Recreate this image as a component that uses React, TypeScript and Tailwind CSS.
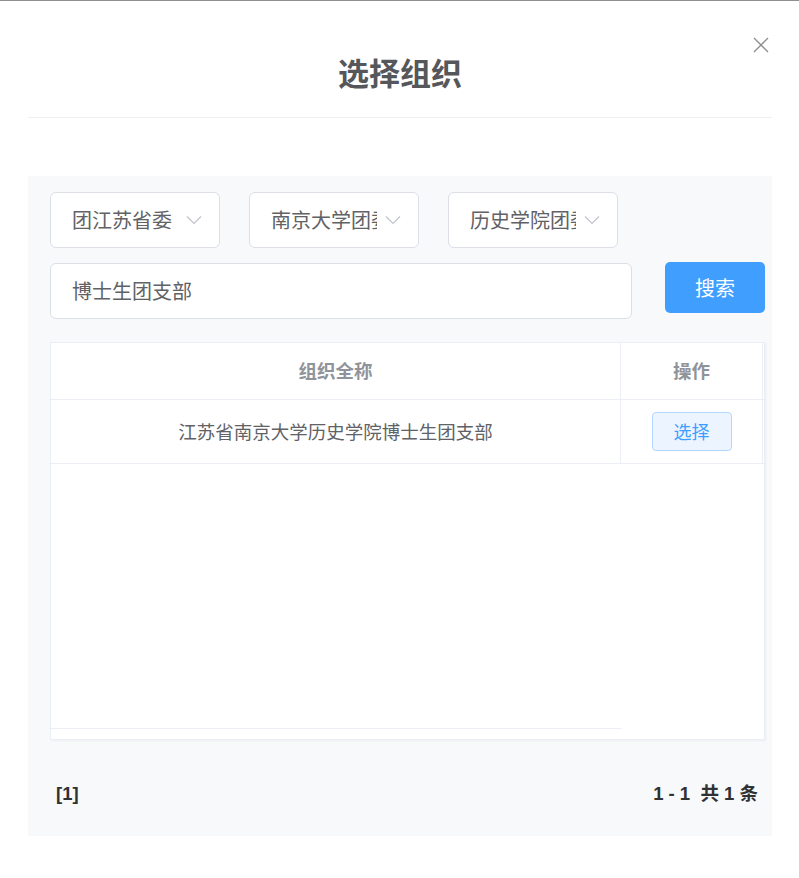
import React from "react";

const font = { fontFamily: '"Noto Sans CJK SC", "Noto Sans", sans-serif' };

function Chevron() {
  return (
    <svg width="16" height="9" viewBox="0 0 16 9" className="absolute right-[17px] top-1/2 -translate-y-1/2">
      <path d="M1 1 L8 8 L15 1" fill="none" stroke="#c0c4cc" strokeWidth="1.2" />
    </svg>
  );
}

function Select({ text }: { text: string }) {
  return (
    <div className="relative w-[170px] h-[56px] rounded-[6px] border border-[#dcdfe6] bg-white flex items-center pl-[21px] pr-[41px]">
      <div className="overflow-hidden whitespace-nowrap text-[20px] text-[#606266] leading-none">{text}</div>
      <Chevron />
    </div>
  );
}

export default function App() {
  return (
    <div className="w-[799px] h-[878px] bg-white relative" style={font}>
      <div className="h-px bg-[#8f8f8f]" />
      <div className="ml-[28px] mr-[27px]">
        <div className="relative h-[116px] flex items-center justify-center">
          <div className="text-[31px] font-bold text-[#55575b] mt-[26px]">选择组织</div>
          <svg width="16" height="16" viewBox="0 0 16 16" className="absolute right-[3px] top-[36px]">
            <path d="M1 1 L15 15 M15 1 L1 15" stroke="#8c8c8c" strokeWidth="1.3" />
          </svg>
        </div>
        <div className="h-px bg-[#eeeff2]" />
        <div className="h-[58px]" />
        <div className="bg-[#f8f9fb] h-[660px] pl-[22px] pr-[7px] pt-[16px] flex flex-col">
          <div className="flex gap-[29px]">
            <Select text="团江苏省委" />
            <Select text="南京大学团委" />
            <Select text="历史学院团委" />
          </div>
          <div className="flex mt-[15px] items-start">
            <div className="w-[583px] h-[56px] rounded-[6px] border border-[#dcdfe6] bg-white flex items-center pl-[21px] text-[20px] text-[#606266]">
              博士生团支部
            </div>
            <div className="ml-[33px] -mt-px w-[100px] h-[51px] rounded-[5px] bg-[#409eff] text-white text-[20px] flex items-center justify-center">
              搜索
            </div>
          </div>
          <div className="mt-[23px] w-[715px] h-[398px] border border-[#ebeef5] bg-white flex flex-col shadow-[1px_1px_2px_rgba(0,0,0,0.05)]">
            <div className="flex h-[57px] border-b border-[#ebeef5]">
              <div className="w-[569px] flex items-center justify-center text-[18.5px] font-bold text-[#909399]">组织全称</div>
              <div className="w-[143px] border-l border-r border-[#ebeef5] flex items-center justify-center text-[18.5px] font-bold text-[#909399]">操作</div>
            </div>
            <div className="flex h-[64px] border-b border-[#ebeef5]">
              <div className="w-[569px] flex items-center justify-center text-[18.5px] text-[#606266]">江苏省南京大学历史学院博士生团支部</div>
              <div className="w-[143px] border-l border-r border-[#ebeef5] flex items-center justify-center">
                <div className="w-[80px] h-[39px] rounded-[4px] border border-[#b3d8ff] bg-[#ecf5ff] text-[#409eff] text-[18px] flex items-center justify-center">选择</div>
              </div>
            </div>
            <div className="flex-1 flex">
              <div className="w-[570px] flex flex-col">
                <div className="flex-1" />
                <div className="h-[11px] border-t border-[#ebeef5]" />
              </div>
            </div>
          </div>
          <div className="flex justify-between items-center mt-[40px] pl-[6px] text-[18.5px] font-bold text-[#303133]" style={{ fontFamily: '"Liberation Sans", "Noto Sans CJK SC", sans-serif' }}>
            <span>[1]</span>
            <span className="mr-[7px]">1 - 1&nbsp;&nbsp;共 1 条</span>
          </div>
        </div>
      </div>
    </div>
  );
}
